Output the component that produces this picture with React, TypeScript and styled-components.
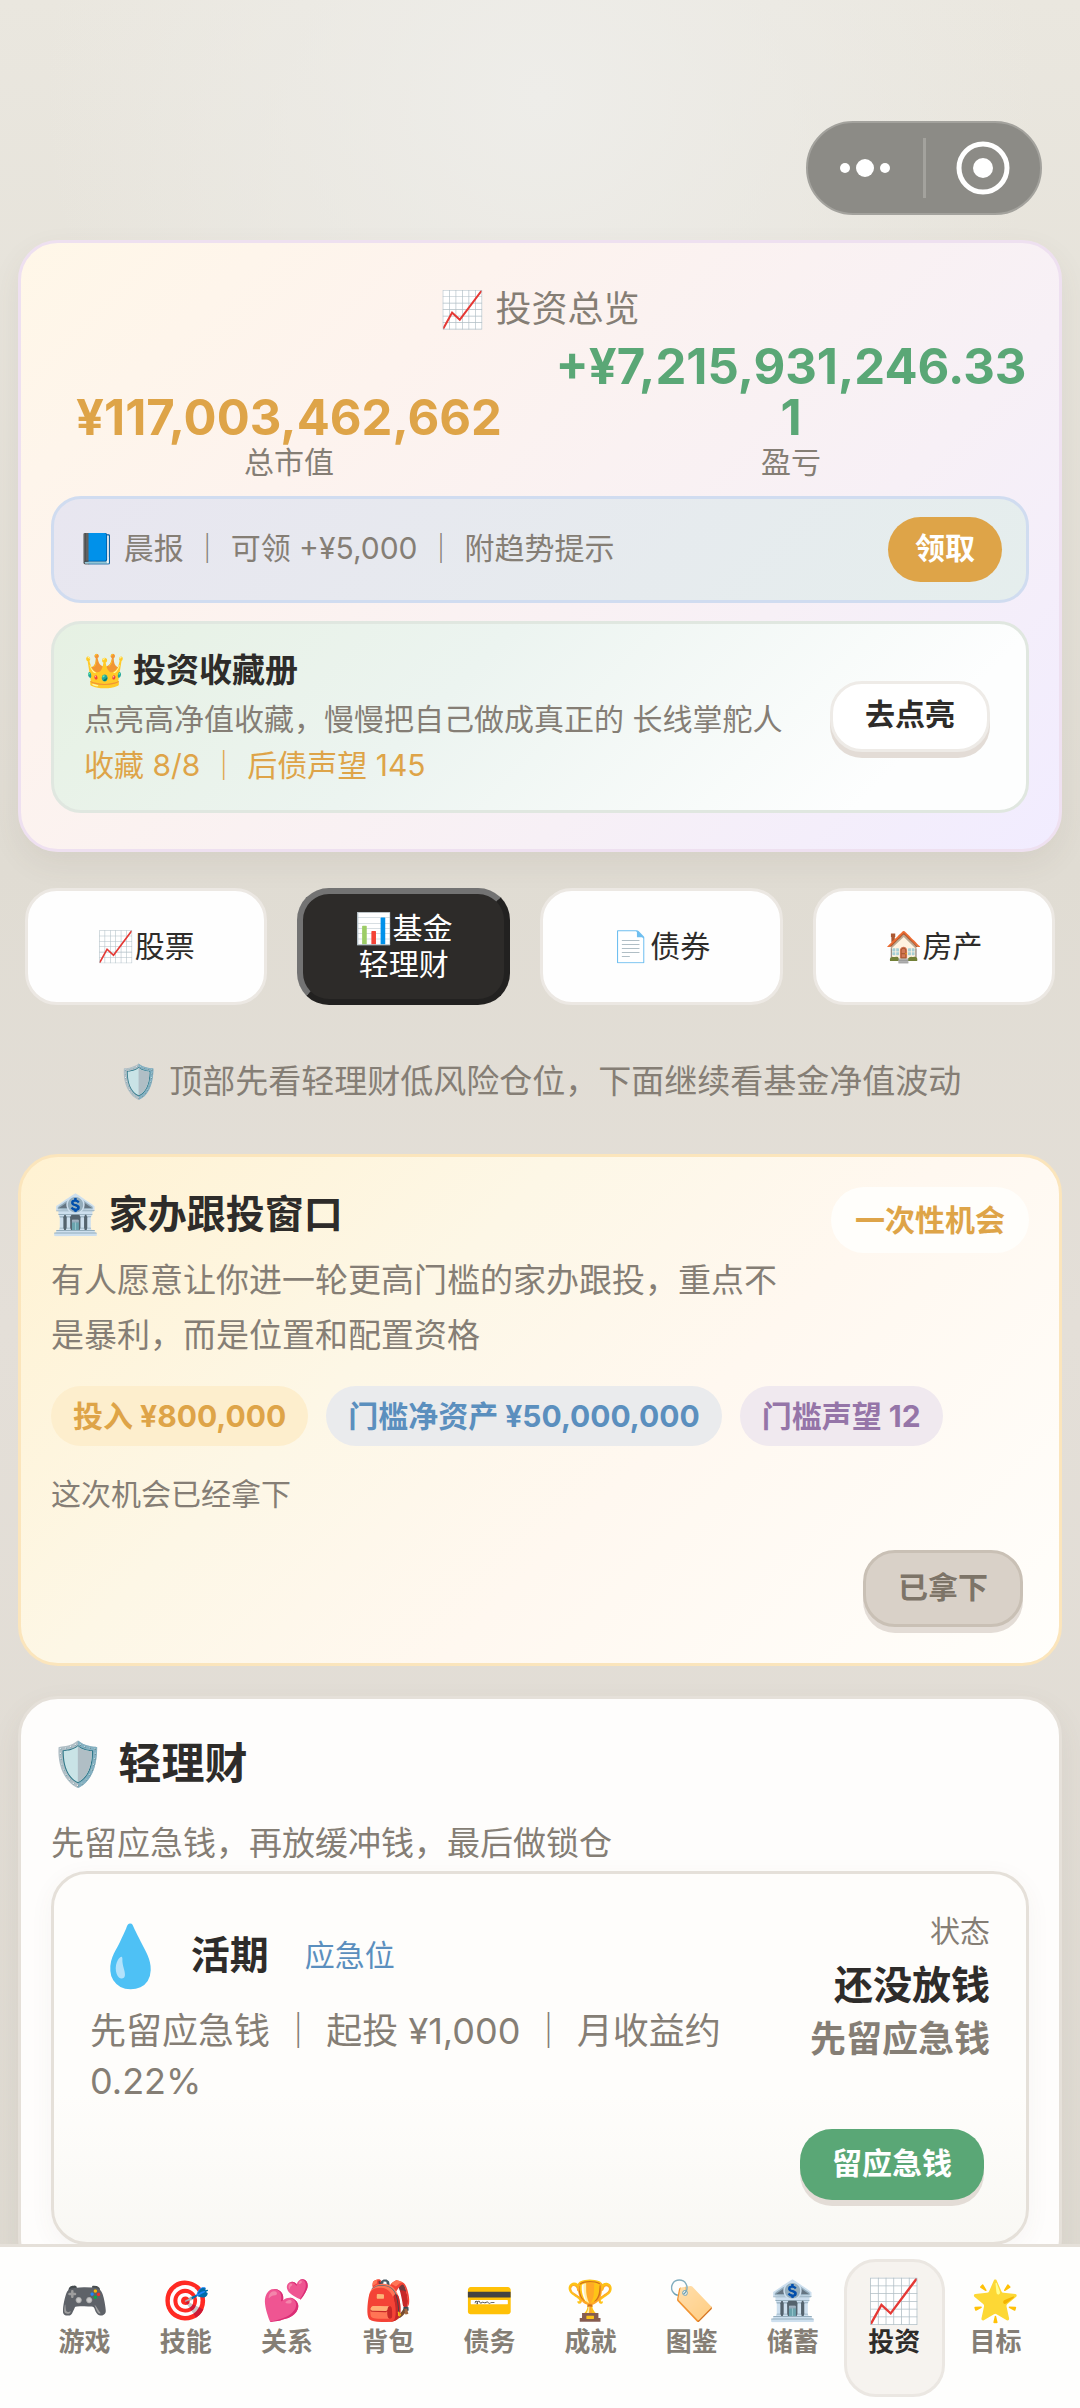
import { useState } from "react";
import styled, { createGlobalStyle, css } from "styled-components";

const colors = {
  ink: "#2e2c2a",
  muted: "#857e75",
  gold: "#dea448",
  green: "#5aa776",
  blue: "#5b8fbe",
  purple: "#9575a8",
  line: "#e5e0d9",
};

const GlobalStyle = createGlobalStyle`
  * {
    box-sizing: border-box;
  }
  body {
    margin: 0;
    font-family: Inter, "Noto Sans CJK SC", "Noto Color Emoji", sans-serif;
    color: ${colors.ink};
  }
  button {
    font-family: inherit;
    cursor: pointer;
  }
  h1, h2, h3, p, dl, dt, dd {
    margin: 0;
    font-weight: 400;
  }
`;

const Page = styled.div`
  height: 100vh;
  display: flex;
  flex-direction: column;
  background: radial-gradient(circle at 50% 4%, #eeede9 0, rgba(238, 237, 233, 0) 500px),
    linear-gradient(180deg, #eae7df 0, #e0dcd3 36%, #e4dfd8 55%, #dedad1 100%);
`;

const Content = styled.main`
  flex: 1;
  min-height: 0;
  overflow-y: auto;
  scrollbar-width: none;
  padding: 0 18px;
`;

const TopBar = styled.header`
  display: flex;
  justify-content: flex-end;
  padding: 121px 20px 25px;
`;

const Capsule = styled.div`
  display: flex;
  align-items: center;
  width: 236px;
  height: 94px;
  border: 2px solid #a3a29d;
  border-radius: 47px;
  background: #8c8b86;
`;

const CapsuleButton = styled.button`
  flex: 1;
  height: 60px;
  padding: 0;
  border: 0;
  background: transparent;
  & + & {
    border-left: 3px solid #a3a29d;
  }
  > svg {
    display: block;
    margin: 0 auto;
  }
`;

const Card = styled.section`
  border: 3px solid ${colors.line};
  border-radius: 40px;
  padding: 30px;
`;

const SummaryCard = styled(Card)`
  padding: 36px 30px;
  border-color: #eee0f0;
  background: linear-gradient(135deg, #fff7e8 0, #fdf3ee 30%, #f7f0f6 68%, #f1ecff 100%);
  box-shadow: 0 12px 30px rgba(90, 80, 60, 0.08);
`;

const SummaryTitle = styled.h1`
  font-size: 36px;
  line-height: 60px;
  text-align: center;
  color: ${colors.muted};
`;

const Stats = styled.dl`
  display: grid;
  grid-template-columns: 1fr 1fr;
  align-items: end;
  gap: 26px;
  margin: 2px 0 15px;
  text-align: center;
`;

const Stat = styled.div`
  display: flex;
  flex-direction: column-reverse;
`;

const StatValue = styled.dd<{ color: string }>`
  font-size: 49px;
  font-weight: 700;
  line-height: 51px;
  word-break: break-all;
  color: ${({ color }) => color};
`;

const StatLabel = styled.dt`
  font-size: 30px;
  line-height: 38px;
  color: ${colors.muted};
`;

const Report = styled.div`
  display: flex;
  justify-content: space-between;
  align-items: center;
  padding: 18px 24px;
  border: 3px solid #d0dcf0;
  border-radius: 30px;
  background: linear-gradient(135deg, #e8e6f0, #e5eeed);
`;

const ReportText = styled.p`
  padding-bottom: 3px;
  font-size: 30px;
  line-height: 46px;
  color: ${colors.muted};
`;

const ClaimButton = styled.button`
  height: 65px;
  padding: 0 27px 4px;
  border: 0;
  border-radius: 33px;
  background: ${colors.gold};
  color: #fff;
  font-size: 30px;
  font-weight: 700;
  line-height: 46px;
`;

const Album = styled.div`
  display: flex;
  justify-content: space-between;
  align-items: center;
  margin-top: 18px;
  padding: 20px 36px 22px 30px;
  border: 3px solid #e0e7e0;
  border-radius: 30px;
  background: linear-gradient(135deg, #e6f1e3 0, #ecf4f0 40%, #fdfefe 85%);
`;

const AlbumTitle = styled.h2`
  font-size: 33px;
  font-weight: 700;
  line-height: 52px;
`;

const AlbumText = styled.p<{ color: string }>`
  font-size: 30px;
  line-height: 46px;
  color: ${({ color }) => color};
`;

const variants = {
  plain: css`
    height: 71px;
    border: 3px solid #eeebe7;
    background: #fff;
    color: ${colors.ink};
  `,
  done: css`
    height: 77px;
    border: 3px solid #c9c0b5;
    background: #d9d1c8;
    color: #7d7468;
  `,
  green: css`
    height: 71px;
    border: 0;
    background: ${colors.green};
    color: #fff;
  `,
};

const ActionButton = styled.button<{ variant: keyof typeof variants }>`
  flex-shrink: 0;
  min-width: 160px;
  padding: 0 32px 4px;
  border-radius: 32px;
  box-shadow: 0 6px 0 #e3dcd6;
  font-size: 30px;
  font-weight: 700;
  line-height: 46px;
  ${({ variant }) => variants[variant]}
`;

const Tabs = styled.nav`
  display: flex;
  gap: 30px;
  margin: 36px 0 51px;
  padding: 0 7px;
`;

const Tab = styled.button<{ active: boolean }>`
  flex: 1;
  height: 117px;
  padding: 0 0 2px;
  border: 3px solid #ece8e3;
  border-radius: 32px;
  background: #fefefe;
  color: ${colors.ink};
  font-size: 30px;
  line-height: 36px;
  ${({ active }) =>
    active &&
    css`
      flex: 0 0 213px;
      border: 6px solid;
      border-color: #737373 #222120 #222120 #737373;
      background: #2d2b29;
      color: #fff;
    `}
`;

const TabNote = styled.span`
  display: block;
`;

const Hint = styled.p`
  margin-bottom: 48px;
  font-size: 33px;
  line-height: 50px;
  text-align: center;
  color: ${colors.muted};
`;

const PromoCard = styled(Card)`
  margin-bottom: 30px;
  padding-bottom: 36px;
  border-color: #fbe5bc;
  background: linear-gradient(135deg, #fff2d2 0, #fdf7e6 35%, #fff8f0 60%, #fffefb 100%);
`;

const PromoHead = styled.div`
  display: flex;
  align-items: flex-start;
  gap: 30px;
`;

const PromoInfo = styled.div`
  flex: 1;
`;

const PromoTitle = styled.h2`
  margin-bottom: 12px;
  font-size: 39px;
  font-weight: 700;
  line-height: 54px;
`;

const Description = styled.p`
  font-size: 33px;
  line-height: 55px;
  color: ${colors.muted};
`;

const PromoBadge = styled.span`
  padding: 0 24px;
  border-radius: 33px;
  background: #fffefb;
  color: ${colors.gold};
  font-size: 30px;
  font-weight: 700;
  line-height: 66px;
`;

const Chips = styled.div`
  display: flex;
  flex-wrap: wrap;
  gap: 18px;
  margin: 23px 0 25px;
`;

const Chip = styled.span<{ color: string; background: string }>`
  padding: 0 22px;
  border-radius: 30px;
  background: ${({ background }) => background};
  color: ${({ color }) => color};
  font-size: 30px;
  font-weight: 700;
  line-height: 60px;
`;

const PromoState = styled.p`
  margin-bottom: 33px;
  font-size: 30px;
  line-height: 46px;
  color: ${colors.muted};
`;

const Actions = styled.div`
  display: flex;
  justify-content: flex-end;
  padding-right: 6px;
`;

const SavingsCard = styled(Card)`
  background: #fefdfc;
  box-shadow: 0 12px 30px rgba(90, 80, 60, 0.08);
`;

const SavingsTitle = styled.h2`
  display: flex;
  gap: 14px;
  margin-bottom: 19px;
  font-size: 43px;
  font-weight: 700;
  line-height: 68px;
`;

const Product = styled.article`
  padding: 36px 36px 42px;
  border: 3px solid ${colors.line};
  border-radius: 36px;
  background: linear-gradient(180deg, #fefdfb 60%, #f9f8f4 100%);
  box-shadow: 0 6px 24px rgba(90, 80, 60, 0.05);
`;

const ProductBody = styled.div`
  display: flex;
  gap: 30px;
  margin-bottom: 23px;
`;

const ProductInfo = styled.div`
  flex: 1;
`;

const ProductHead = styled.div`
  display: flex;
  align-items: center;
  height: 90px;
  margin-bottom: 6px;
`;

const ProductIcon = styled.span`
  margin-left: 3px;
  font-size: 60px;
  line-height: 90px;
`;

const ProductName = styled.h3`
  margin: 0 36px 0 23px;
  font-size: 39px;
  font-weight: 700;
  line-height: 54px;
`;

const ProductTag = styled.span`
  font-size: 30px;
  line-height: 46px;
  color: ${colors.blue};
`;

const ProductText = styled.p`
  font-size: 36px;
  line-height: 50px;
  color: ${colors.muted};
`;

const ProductState = styled.div`
  display: flex;
  flex-direction: column;
  text-align: right;
  font-size: 36px;
  line-height: 54px;
  color: ${colors.muted};
`;

const StateLabel = styled.span`
  margin-bottom: 6px;
  font-size: 30px;
  line-height: 42px;
`;

const StateValue = styled.strong`
  font-size: 39px;
  color: ${colors.ink};
`;

const BottomNav = styled.nav`
  display: flex;
  height: 164px;
  padding: 12px 34px 8px;
  border-top: 3px solid ${colors.line};
  background: #fefefd;
`;

const NavItem = styled.button<{ active: boolean }>`
  flex: 1;
  display: flex;
  flex-direction: column;
  align-items: center;
  height: 138px;
  padding: 12px 0 0;
  border: 3px solid ${({ active }) => (active ? "#ebe7e2" : "transparent")};
  border-radius: 32px;
  background: ${({ active }) => (active ? "#f6f3ef" : "transparent")};
  color: ${({ active }) => (active ? colors.ink : colors.muted)};
  font-size: 26px;
  font-weight: 700;
  line-height: 32px;
`;

const NavIcon = styled.span<{ active: boolean }>`
  height: 52px;
  font-size: ${({ active }) => (active ? 43 : 39)}px;
  font-weight: 400;
  line-height: 52px;
`;

const tabs = [
  { icon: "📈", name: "股票" },
  { icon: "📊", name: "基金", note: "轻理财" },
  { icon: "📄", name: "债券" },
  { icon: "🏠", name: "房产" },
];

const navItems = [
  { icon: "🎮", name: "游戏" },
  { icon: "🎯", name: "技能" },
  { icon: "💕", name: "关系" },
  { icon: "🎒", name: "背包" },
  { icon: "💳", name: "债务" },
  { icon: "🏆", name: "成就" },
  { icon: "🏷️", name: "图鉴" },
  { icon: "🏦", name: "储蓄" },
  { icon: "📈", name: "投资" },
  { icon: "🌟", name: "目标" },
];

const Summary = () => (
  <SummaryCard>
    <SummaryTitle>📈 投资总览</SummaryTitle>
    <Stats>
      <Stat>
        <StatLabel>总市值</StatLabel>
        <StatValue color={colors.gold}>¥117,003,462,662</StatValue>
      </Stat>
      <Stat>
        <StatLabel>盈亏</StatLabel>
        <StatValue color={colors.green}>+¥7,215,931,246.331</StatValue>
      </Stat>
    </Stats>
    <Report>
      <ReportText>📘 晨报 ｜ 可领 +¥5,000 ｜ 附趋势提示</ReportText>
      <ClaimButton>领取</ClaimButton>
    </Report>
    <Album>
      <div>
        <AlbumTitle>👑 投资收藏册</AlbumTitle>
        <AlbumText color={colors.muted}>
          点亮高净值收藏，慢慢把自己做成真正的 长线掌舵人
        </AlbumText>
        <AlbumText color={colors.gold}>收藏 8/8 ｜ 后债声望 145</AlbumText>
      </div>
      <ActionButton variant="plain">去点亮</ActionButton>
    </Album>
  </SummaryCard>
);

const Promo = () => (
  <PromoCard>
    <PromoHead>
      <PromoInfo>
        <PromoTitle>🏦 家办跟投窗口</PromoTitle>
        <Description>
          有人愿意让你进一轮更高门槛的家办跟投，重点不是暴利，而是位置和配置资格
        </Description>
      </PromoInfo>
      <PromoBadge>一次性机会</PromoBadge>
    </PromoHead>
    <Chips>
      <Chip color={colors.gold} background="#fdeecd">
        投入 ¥800,000
      </Chip>
      <Chip color={colors.blue} background="#eaebed">
        门槛净资产 ¥50,000,000
      </Chip>
      <Chip color={colors.purple} background="#f0e9ef">
        门槛声望 12
      </Chip>
    </Chips>
    <PromoState>这次机会已经拿下</PromoState>
    <Actions>
      <ActionButton variant="done" disabled>
        已拿下
      </ActionButton>
    </Actions>
  </PromoCard>
);

const Savings = () => (
  <SavingsCard>
    <SavingsTitle>
      <span>🛡️</span>
      <span>轻理财</span>
    </SavingsTitle>
    <Description>先留应急钱，再放缓冲钱，最后做锁仓</Description>
    <Product>
      <ProductBody>
        <ProductInfo>
          <ProductHead>
            <ProductIcon>💧</ProductIcon>
            <ProductName>活期</ProductName>
            <ProductTag>应急位</ProductTag>
          </ProductHead>
          <ProductText>先留应急钱 ｜ 起投 ¥1,000 ｜ 月收益约 0.22%</ProductText>
        </ProductInfo>
        <ProductState>
          <StateLabel>状态</StateLabel>
          <StateValue>还没放钱</StateValue>
          <strong>先留应急钱</strong>
        </ProductState>
      </ProductBody>
      <Actions>
        <ActionButton variant="green">留应急钱</ActionButton>
      </Actions>
    </Product>
  </SavingsCard>
);

export default function App() {
  const [tab, setTab] = useState("基金");
  const [page, setPage] = useState("投资");

  return (
    <Page>
      <GlobalStyle />
      <Content>
        <TopBar>
          <Capsule>
            <CapsuleButton aria-label="更多">
              <svg width="56" height="60" viewBox="0 0 56 60" fill="#fff">
                <circle cx="8" cy="30" r="5" />
                <circle cx="28" cy="30" r="9" />
                <circle cx="48" cy="30" r="5" />
              </svg>
            </CapsuleButton>
            <CapsuleButton aria-label="关闭">
              <svg width="56" height="60" viewBox="0 0 56 60">
                <circle cx="28" cy="30" r="24" fill="none" stroke="#fff" strokeWidth="5" />
                <circle cx="28" cy="30" r="10" fill="#fff" />
              </svg>
            </CapsuleButton>
          </Capsule>
        </TopBar>
        <Summary />
        <Tabs>
          {tabs.map(({ icon, name, note }) => (
            <Tab key={name} active={tab === name} onClick={() => setTab(name)}>
              {icon}
              {name}
              {note && <TabNote>{note}</TabNote>}
            </Tab>
          ))}
        </Tabs>
        <Hint>🛡️ 顶部先看轻理财低风险仓位，下面继续看基金净值波动</Hint>
        <Promo />
        <Savings />
      </Content>
      <BottomNav>
        {navItems.map(({ icon, name }) => (
          <NavItem key={name} active={page === name} onClick={() => setPage(name)}>
            <NavIcon active={page === name}>{icon}</NavIcon>
            {name}
          </NavItem>
        ))}
      </BottomNav>
    </Page>
  );
}
